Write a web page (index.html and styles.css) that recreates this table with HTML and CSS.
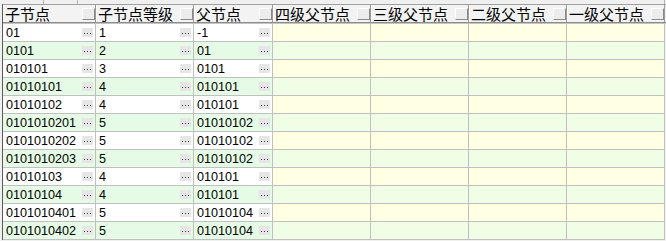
FILE: index.html
```html
<!DOCTYPE html>
<html>
<head>
<meta charset="utf-8">
<link rel="stylesheet" href="styles.css">
</head>
<body>
<div class="wrap">
  <div class="strip">
    <span class="tick t1"></span><span class="tick t2"></span><span class="tick t3"></span>
  </div>
  <div class="grid">
    <div class="row head">
      <div class="hc"><span class="ht">子节点</span><span class="hb"></span></div>
      <div class="hc"><span class="ht">子节点等级</span><span class="hb"></span></div>
      <div class="hc"><span class="ht">父节点</span><span class="hb"></span></div>
      <div class="hc"><span class="ht">四级父节点</span><span class="hb"></span></div>
      <div class="hc"><span class="ht">三级父节点</span><span class="hb"></span></div>
      <div class="hc"><span class="ht">二级父节点</span><span class="hb"></span></div>
      <div class="hc"><span class="ht">一级父节点</span><span class="hb"></span></div>
    </div>
    <div class="body">
      <div class="row odd"><div class="c"><span>01</span><i class="eb"></i></div><div class="c"><span>1</span><i class="eb"></i></div><div class="c"><span>-1</span><i class="eb"></i></div><div class="e"></div><div class="e"></div><div class="e"></div><div class="e"></div></div>
      <div class="row even"><div class="c"><span>0101</span><i class="eb"></i></div><div class="c"><span>2</span><i class="eb"></i></div><div class="c"><span>01</span><i class="eb"></i></div><div class="e"></div><div class="e"></div><div class="e"></div><div class="e"></div></div>
      <div class="row odd"><div class="c"><span>010101</span><i class="eb"></i></div><div class="c"><span>3</span><i class="eb"></i></div><div class="c"><span>0101</span><i class="eb"></i></div><div class="e"></div><div class="e"></div><div class="e"></div><div class="e"></div></div>
      <div class="row even"><div class="c"><span>01010101</span><i class="eb"></i></div><div class="c"><span>4</span><i class="eb"></i></div><div class="c"><span>010101</span><i class="eb"></i></div><div class="e"></div><div class="e"></div><div class="e"></div><div class="e"></div></div>
      <div class="row odd"><div class="c"><span>01010102</span><i class="eb"></i></div><div class="c"><span>4</span><i class="eb"></i></div><div class="c"><span>010101</span><i class="eb"></i></div><div class="e"></div><div class="e"></div><div class="e"></div><div class="e"></div></div>
      <div class="row even"><div class="c"><span>0101010201</span><i class="eb"></i></div><div class="c"><span>5</span><i class="eb"></i></div><div class="c"><span>01010102</span><i class="eb"></i></div><div class="e"></div><div class="e"></div><div class="e"></div><div class="e"></div></div>
      <div class="row odd"><div class="c"><span>0101010202</span><i class="eb"></i></div><div class="c"><span>5</span><i class="eb"></i></div><div class="c"><span>01010102</span><i class="eb"></i></div><div class="e"></div><div class="e"></div><div class="e"></div><div class="e"></div></div>
      <div class="row even"><div class="c"><span>0101010203</span><i class="eb"></i></div><div class="c"><span>5</span><i class="eb"></i></div><div class="c"><span>01010102</span><i class="eb"></i></div><div class="e"></div><div class="e"></div><div class="e"></div><div class="e"></div></div>
      <div class="row odd"><div class="c"><span>01010103</span><i class="eb"></i></div><div class="c"><span>4</span><i class="eb"></i></div><div class="c"><span>010101</span><i class="eb"></i></div><div class="e"></div><div class="e"></div><div class="e"></div><div class="e"></div></div>
      <div class="row even"><div class="c"><span>01010104</span><i class="eb"></i></div><div class="c"><span>4</span><i class="eb"></i></div><div class="c"><span>010101</span><i class="eb"></i></div><div class="e"></div><div class="e"></div><div class="e"></div><div class="e"></div></div>
      <div class="row odd"><div class="c"><span>0101010401</span><i class="eb"></i></div><div class="c"><span>5</span><i class="eb"></i></div><div class="c"><span>01010104</span><i class="eb"></i></div><div class="e"></div><div class="e"></div><div class="e"></div><div class="e"></div></div>
      <div class="row even"><div class="c"><span>0101010402</span><i class="eb"></i></div><div class="c"><span>5</span><i class="eb"></i></div><div class="c"><span>01010104</span><i class="eb"></i></div><div class="e"></div><div class="e"></div><div class="e"></div><div class="e"></div></div>
    </div>
  </div>
</div>
</body>
</html>
```

FILE: styles.css
```css
html, body {
  margin: 0;
  padding: 0;
  background: #f0f0f0;
  width: 666px;
  height: 241px;
  overflow: hidden;
}
.wrap {
  width: 666px;
  padding-left: 2px;
  box-sizing: border-box;
}
.strip {
  position: relative;
  height: 4px;
  margin-left: -2px;
  background: #f0f0f0;
}
.tick {
  position: absolute;
  top: 0;
  width: 1px;
  height: 4px;
  background: #b4b4b4;
}
.t1 { left: 43px; }
.t2 { left: 77px; }
.t3 { left: 664px; }
.grid {
  border-left: 1px solid #5a5a5a;
  width: 663px;
}
.row {
  display: grid;
  grid-template-columns: 93px 98px 79px 98px 98px 98px 98px;
}
.head {
  border-top: 1px solid #a0a0a0;
  border-bottom: 1px solid #8c8c8c;
  background: #f3f3f3;
}
.hc {
  height: 17px;
  display: flex;
  align-items: center;
  justify-content: space-between;
  border-right: 1px solid #9a9a9a;
  box-shadow: inset 1px 0 0 #ffffff;
  padding-left: 2px;
  box-sizing: border-box;
}
.ht {
  font-family: "Noto Sans CJK SC", sans-serif;
  font-size: 15px;
  line-height: 17px;
  color: #000;
}
.hb {
  width: 13px;
  height: 12px;
  background: #ececec;
  box-sizing: border-box;
  border-right: 1px solid #8a8a8a;
  border-bottom: 1px solid #8a8a8a;
  border-top: 1px solid #ffffff;
  border-left: 1px solid #ffffff;
}
.body {
  border-top: 1px solid #c4c4c4;
}
.c, .e {
  height: 18px;
  box-sizing: border-box;
  border-right: 1px solid #c0c0c0;
  border-bottom: 1px solid #c0c0c0;
}
.c {
  display: flex;
  align-items: center;
  justify-content: space-between;
  padding-left: 3px;
  padding-right: 2px;
  font-family: "Liberation Sans", Arial, sans-serif;
  font-size: 12.6px;
  color: #000;
}
.eb {
  width: 11px;
  height: 9px;
  background:
    linear-gradient(#3c3c3c, #3c3c3c) 2px 5px / 1px 1px no-repeat,
    linear-gradient(#3c3c3c, #3c3c3c) 5px 5px / 1px 1px no-repeat,
    linear-gradient(#3c3c3c, #3c3c3c) 8px 5px / 1px 1px no-repeat,
    #e6e6e6;
}
.odd .c { background: #ffffff; }
.even .c { background: #e5fbe5; }
.odd .e { background: #ffffe4; }
.even .e { background: #effee4; }
```
